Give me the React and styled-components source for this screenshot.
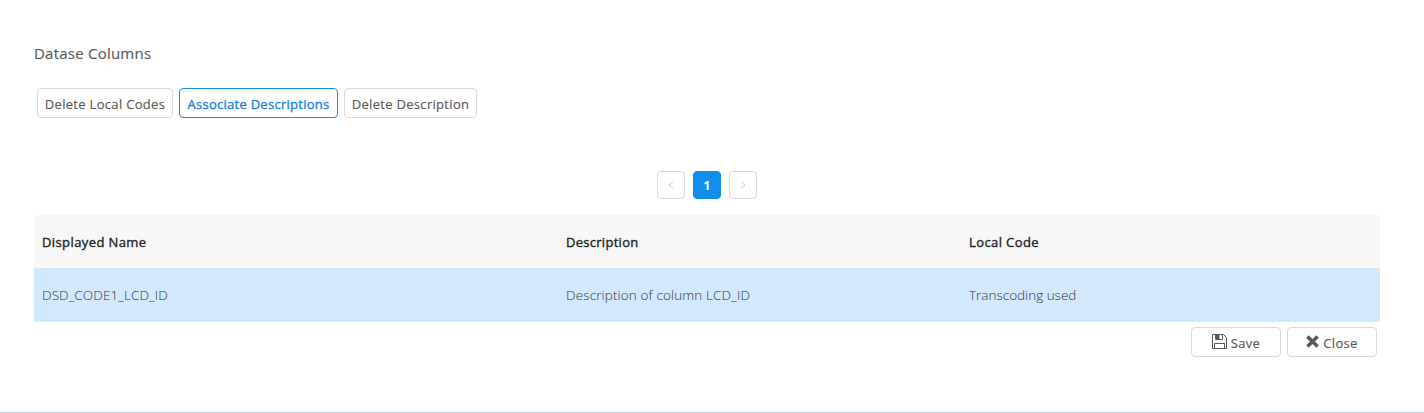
import React from "react";
import styled, { createGlobalStyle } from "styled-components";

const GlobalStyle = createGlobalStyle`
  *, *::before, *::after { box-sizing: border-box; }
  body {
    margin: 0;
    background: #fff;
    color: #595959;
    font-family: "Open Sans", "Noto Sans", sans-serif;
    font-size: 14px;
    line-height: 20px;
  }
`;

const Page = styled.main`
  display: flex;
  flex-direction: column;
  height: 413px;
  padding: 41px 44px 0 34px;
  border-bottom: 1px solid #b5cdd3;
`;

const Title = styled.h1`
  margin: 0;
  font-size: 15px;
  font-weight: 400;
  line-height: 24px;
  letter-spacing: 0.23px;
  -webkit-text-stroke: 0.15px currentColor;
`;

const Toolbar = styled.div`
  display: flex;
  gap: 6px;
  margin-top: 23px;
  padding: 0 3px;
`;

const Button = styled.button`
  display: flex;
  align-items: center;
  justify-content: center;
  gap: 4px;
  width: ${({ $width }) => $width}px;
  height: 30px;
  padding: 2px 0 0;
  border: 1px solid ${({ $active }) => ($active ? "#108ee9" : "#d9d9d9")};
  border-radius: 4px;
  background: #fff;
  color: ${({ $active }) => ($active ? "#1683e6" : "#595959")};
  font: 400 13px/20px "Open Sans", "Noto Sans", sans-serif;
  white-space: nowrap;
`;

const Pagination = styled.nav`
  display: flex;
  justify-content: center;
  gap: 8px;
  margin-top: 53px;
`;

const PageButton = styled.button`
  display: flex;
  align-items: center;
  justify-content: center;
  width: 28px;
  height: 28px;
  padding: 0;
  border: 1px solid ${({ $current }) => ($current ? "#108ee9" : "#d9d9d9")};
  border-radius: 4px;
  background: ${({ $current }) => ($current ? "#108ee9" : "#fff")};
  color: ${({ $current }) => ($current ? "#fff" : "#c4c4c4")};
  font: 700 12px/26px "Open Sans", "Noto Sans", sans-serif;
`;

const PageNumber = styled.span`
  padding-top: 2px;
`;

const Table = styled.div`
  margin-top: 16px;
  border-radius: 4px 4px 0 0;
  overflow: hidden;
`;

const Row = styled.div`
  display: grid;
  grid-template-columns: 524px 403px 1fr;
  align-items: center;
  height: ${({ $header }) => ($header ? 53 : 54)}px;
  padding-top: 1px;
  background: ${({ $header }) => ($header ? "#f7f7f7" : "#d2e8fd")};
  border-bottom: ${({ $header }) => ($header ? "none" : "1px solid #e6e9ec")};
`;

const Cell = styled.span`
  padding-left: 8px;
  color: ${({ $header }) => ($header ? "#222" : "#2f363d")};
  font-size: ${({ $header }) => ($header ? 13 : 13.5)}px;
  font-weight: ${({ $header }) => ($header ? 400 : 300)};
  letter-spacing: ${({ $spacing }) => $spacing || 0}px;
  -webkit-text-stroke: ${({ $header }) => ($header ? "0.35px currentColor" : "0")};
`;

const Label = styled.span`
  letter-spacing: ${({ $strong }) => ($strong ? 0.27 : 0.31)}px;
  -webkit-text-stroke: ${({ $strong }) => ($strong ? 0.35 : 0.15)}px currentColor;
`;

const Actions = styled.footer`
  display: flex;
  justify-content: flex-end;
  gap: 6px;
  padding: 5px 3px 0;
`;

const IconSlot = styled.span`
  display: flex;
  padding-bottom: 3px;
`;

const ArrowIcon = ({ next }) => (
  <svg width="6" height="8" viewBox="0 0 6 8" fill="none" stroke="currentColor" strokeWidth="0.9">
    <path d={next ? "M1 1l4 3-4 3" : "M5 1L1 4l4 3"} />
  </svg>
);

const SaveIcon = () => (
  <svg width="15" height="15" viewBox="0 0 15 15" fill="none" stroke="#595959">
    <path d="M.5 .5h11l3 3v11H.5z" />
    <path d="M3.5 .5v5h7v-5M2.5 14.5v-5h10v5" />
    <path d="M4 1h3.5v4H4z" fill="#595959" stroke="none" />
  </svg>
);

const CloseIcon = () => (
  <svg width="13" height="13" viewBox="0 0 12 12" fill="none" stroke="#595959" strokeWidth="3.3">
    <path d="M1.3 1.3l9.4 9.4M10.7 1.3l-9.4 9.4" />
  </svg>
);

export default function App() {
  return (
    <>
      <GlobalStyle />
      <Page>
        <Title>Datase Columns</Title>
        <Toolbar>
          <Button $width={136}><Label>Delete Local Codes</Label></Button>
          <Button $width={159} $active><Label $strong>Associate Descriptions</Label></Button>
          <Button $width={133}><Label>Delete Description</Label></Button>
        </Toolbar>
        <Pagination>
          <PageButton aria-label="Previous page"><ArrowIcon /></PageButton>
          <PageButton $current><PageNumber>1</PageNumber></PageButton>
          <PageButton aria-label="Next page"><ArrowIcon next /></PageButton>
        </Pagination>
        <Table>
          <Row $header>
            <Cell $header $spacing={0.4}>Displayed Name</Cell>
            <Cell $header $spacing={0.28}>Description</Cell>
            <Cell $header $spacing={0.4}>Local Code</Cell>
          </Row>
          <Row>
            <Cell $spacing={0.1}>DSD_CODE1_LCD_ID</Cell>
            <Cell $spacing={0.13}>Description of column LCD_ID</Cell>
            <Cell>Transcoding used</Cell>
          </Row>
        </Table>
        <Actions>
          <Button $width={90}><IconSlot><SaveIcon /></IconSlot><Label>Save</Label></Button>
          <Button $width={90}><IconSlot><CloseIcon /></IconSlot><Label>Close</Label></Button>
        </Actions>
      </Page>
    </>
  );
}
